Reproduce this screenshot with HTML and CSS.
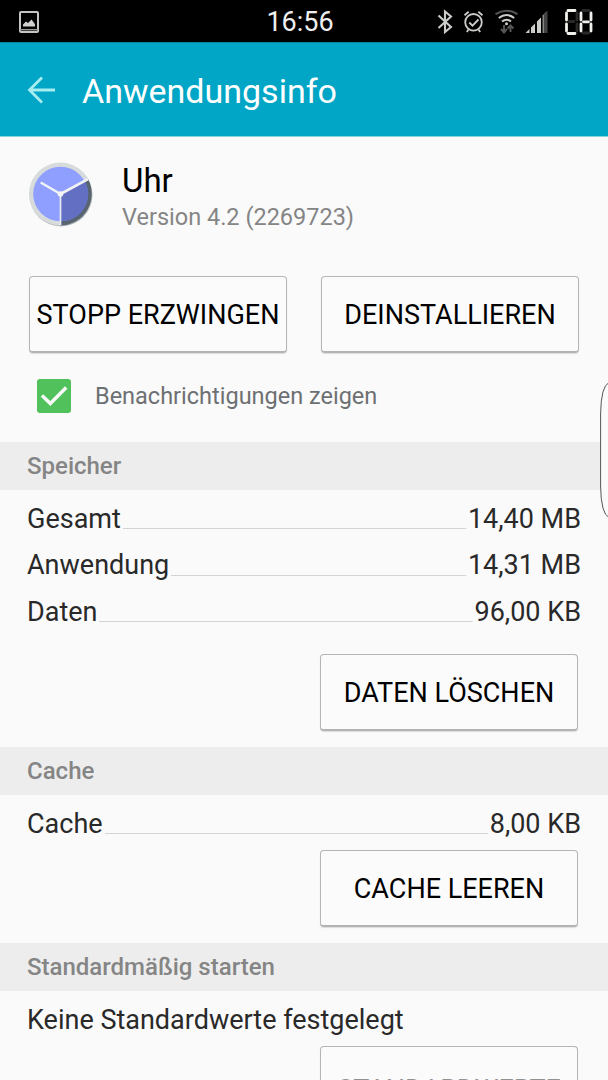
FILE: index.html
```html
<!DOCTYPE html>
<html lang="de">
<head>
<meta charset="utf-8">
<title>Anwendungsinfo</title>
<link rel="stylesheet" href="styles.css">
</head>
<body>
<div class="phone">
  <div class="status">
    <svg class="status-left" width="20" height="22" viewBox="0 0 20 22"><rect x="1" y="1" width="18" height="20" rx="1" fill="none" stroke="#c3c5c2" stroke-width="2"/><path d="M1 18.7h18" stroke="#969896" stroke-width="1.5"/><path d="M4 15.5v-2l3-3 2 1.5 3.5-3.5 3 4 .5 1v2z" fill="#d0d1ce"/></svg>
    <time class="clock">16:56</time>
    <svg class="status-right" width="188" height="42" viewBox="0 0 188 42">
      <g fill="none" stroke="#cbcdc9" stroke-width="2.1">
        <path d="M18.5 14.5l12.5 11.5-6 5V10.500l6 5L18.500 27"/>
        <circle cx="53.500" cy="21.300" r="8.300" stroke-width="1.800"/>
        <path d="M49.300 21.500l3.200 3.200 6-6.200M44.500 14.200l4.200-3.500M58.300 10.700l4.200 3.500M48.500 28.500l-1.700 2.500M58.500 28.500l1.700 2.500" stroke-width="1.800"/>
        <path d="M75.500 13.200Q86.500 6.200 97.500 13.200" stroke="#555"/>
        <path d="M78.800 17Q86.500 11 94.200 17M82 20.500q4.500-3.500 9 0"/>
      </g>
      <circle cx="86.500" cy="22.700" r="1.500" fill="#cbcdc9"/>
      <path d="M84 24v7M81 28l3 3.500 3-3.500M90.500 31v-6M87.500 27.500l3-3 3 3" fill="none" stroke="#555" stroke-width="2"/>
      <path d="M105.500 32l4-4v4zM111 26.500l4-4V32h-4zM117 20.500l4-4V32h-4z" fill="#cbcdc9"/>
      <path d="M123 14.500l4-4V32h-4z" fill="#cbcdc9" transform="translate(-.3)"/>
      <path d="M117 21l4-4V32h-4z" fill="#cbcdc9"/>
      <path d="M122 16h1M128 22" stroke="none"/>
      <path d="M123.500 13.700l4-4V32h-4z" fill="#444"/>
      <g fill="none" stroke-width="2.800" stroke-linecap="round">
        <path d="M149 20.500h5M157 12v7M157 23v7M163 9.500h6M163 32h6" stroke="#282828"/>
        <path d="M148 9.500h7M146.500 12v7M146.500 23v7M148 32.500h7M161 12v7M161 23v7M163.500 20.800h5M171 12v7M171 23v7" stroke="#f0f0ed"/>
      </g>
    </svg>
  </div>
  <header class="bar">
    <svg width="28" height="28" viewBox="0 0 28 28"><path d="M28 14H2M15 1.500L2.500 14 15 26.500" fill="none" stroke="#a6edf0" stroke-width="2.800"/></svg>
    <h1>Anwendungsinfo</h1>
  </header>
  <main>
    <div class="app">
      <svg width="66" height="66" viewBox="0 0 66 66">
        <circle cx="33" cy="33" r="31.500" fill="#b9bcbd"/>
        <circle cx="32.500" cy="32" r="31.500" fill="#d7dbdb"/>
        <path d="M32.500 32L60 17a31.500 31.500 0 0 1-27.500 46.500z" fill="#58646f"/>
        <circle cx="32.500" cy="32" r="27.300" fill="#8f9fff"/>
        <path d="M32.500 32L57 19a27.300 27.300 0 0 1-24.500 40.300z" fill="#626fc2"/>
        <path d="M32.500 32L60 17.200M32.500 32L12.700 20.500" stroke="#f1f2f4" stroke-width="2.600"/>
        <path d="M32.500 32v31" stroke="#e8eaf0" stroke-width="1.700"/>
        <circle cx="32.500" cy="32" r="2.800" fill="#f5f5f5"/>
      </svg>
      <div class="app-text"><div class="name">Uhr</div><div class="version">Version 4.2 (2269723)</div></div>
    </div>
    <div class="buttons"><button class="b1">STOPP ERZWINGEN</button><button class="b2">DEINSTALLIEREN</button></div>
    <label class="check">
      <svg width="34" height="34" viewBox="0 0 34 34"><rect width="34" height="34" rx="3" fill="#51c25b"/><path d="M5 16.500l8.300 8L29.200 8.500" fill="none" stroke="#fafafa" stroke-width="3.400"/></svg>
      <span>Benachrichtigungen zeigen</span>
    </label>
    <h2>Speicher</h2>
    <dl class="rows storage">
      <div class="row"><dt>Gesamt</dt><i></i><dd>14,40 MB</dd></div>
      <div class="row"><dt>Anwendung</dt><i></i><dd>14,31 MB</dd></div>
      <div class="row"><dt>Daten</dt><i></i><dd>96,00 KB</dd></div>
    </dl>
    <div class="action"><button class="b3">DATEN LÖSCHEN</button></div>
    <h2>Cache</h2>
    <dl class="rows cache">
      <div class="row"><dt>Cache</dt><i></i><dd>8,00 KB</dd></div>
    </dl>
    <div class="action"><button class="b4">CACHE LEEREN</button></div>
    <h2>Standardmäßig starten</h2>
    <p class="none">Keine Standardwerte festgelegt</p>
    <div class="action"><button class="disabled">STANDARDWERTE LÖSCHEN</button></div>
  </main>
  <svg class="edge" width="9" height="136" viewBox="0 0 9 136"><path d="M9 .5Q1 4 .6 32V104Q1 132 9 135.500z" fill="#fafafa"/><path d="M9 .5Q1 4 .6 32V104Q1 132 9 135.500" fill="none" stroke="#555" stroke-width="1"/></svg>
</div>
</body>
</html>
```
FILE: styles.css
```css
* { box-sizing: border-box; }
body { margin: 0; background: #fafafa; font-family: Roboto, sans-serif; color: #292929; }
.phone { position: relative; width: 608px; height: 1080px; overflow: hidden; background: #fafafa; }
.status { display: grid; grid-template-columns: 250px 100px 70px 188px; height: 42px; background: #000; align-items: center; }
.status-left { margin-left: 19px; }
.clock { color: #eee; font-size: 27px; line-height: 42px; text-align: center; font-weight: 400; padding-top: 1px; }
.status-right { grid-column: 4; }
.bar { height: 95px; background: #01a6c6; border-top: 1px solid #0587a1; border-bottom: 1px solid #87d2df; display: flex; align-items: center; padding-left: 27px; gap: 27px; }
h1 { margin: 3px 0 0; font-size: 34px; font-weight: 400; color: #fff; line-height: 40px; }
.app { height: 139px; padding: 25px 0 0 28px; display: flex; gap: 28px; }
.name { font-size: 33px; line-height: 38px; color: #000; font-weight: 400; }
.version { font-size: 23.5px; line-height: 28px; margin-top: 3px; color: #858585; font-weight: 400; }
.buttons { display: flex; padding-left: 29px; gap: 34px; height: 77px; }
button { width: 258px; height: 77px; flex: none; padding: 2px 6px 0; margin: 0; border: 1px solid #b5b5b5; border-bottom: 2px solid #b3b3b3; border-radius: 4px; box-shadow: 0 1px 1px #ddd; background: #fbfbfb; color: #000; font: 400 27px/32px Roboto, sans-serif; white-space: nowrap; }
.check { display: flex; align-items: center; height: 89px; padding: 8px 0 11px 37px; gap: 24px; font-size: 23.5px; line-height: 30px; color: #6d7072; }
h2 { height: 48px; margin: 0; background: #ededed; color: #858585; font-size: 24px; line-height: 49px; font-weight: 500; padding-left: 27px; }
.rows { margin: 0; padding: 6px 27px 0; }
.storage { height: 164px; }
.cache { height: 55px; }
.row { height: 46.5px; display: flex; align-items: center; font-size: 27px; line-height: 47px; }
.row dd { margin: 0; }
.row i { flex: 1; height: 1px; background: repeating-linear-gradient(90deg, #ccc 0 1px, #ddd 1px 2px); margin: 19px 2px 0; }
.action { display: flex; justify-content: flex-end; padding-right: 30px; }
.action + h2 { margin-top: 16px; }
.none { margin: 0; height: 55px; padding: 6px 27px 0; font-size: 27px; line-height: 47px; }
button.disabled { height: 112px; color: #929292; white-space: normal; padding-top: 8px; display: block; line-height: 32px; }
.edge { position: absolute; left: 600px; top: 382px; }
```
